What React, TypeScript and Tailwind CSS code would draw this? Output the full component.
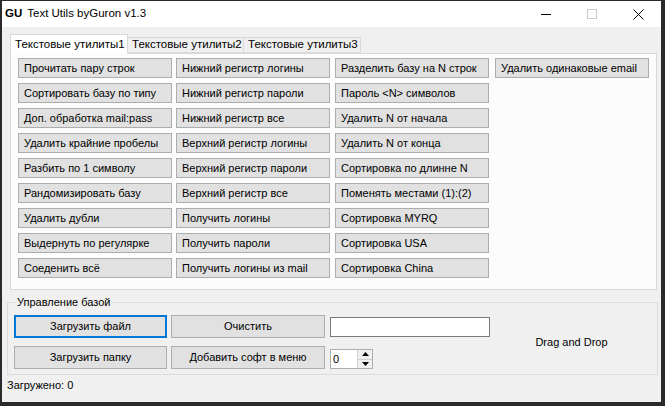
import React from "react";

const col1 = [
  "Прочитать пару строк",
  "Сортировать базу по типу",
  "Доп. обработка mail:pass",
  "Удалить крайние пробелы",
  "Разбить по 1 символу",
  "Рандомизировать базу",
  "Удалить дубли",
  "Выдернуть по регулярке",
  "Соеденить всё",
];
const col2 = [
  "Нижний регистр логины",
  "Нижний регистр пароли",
  "Нижний регистр все",
  "Верхний регистр логины",
  "Верхний регистр пароли",
  "Верхний регистр все",
  "Получить логины",
  "Получить пароли",
  "Получить логины из mail",
];
const col3 = [
  "Разделить базу на N строк",
  "Пароль <N> символов",
  "Удалить N от начала",
  "Удалить N от конца",
  "Сортировка по длинне N",
  "Поменять местами (1):(2)",
  "Сортировка MYRQ",
  "Сортировка USA",
  "Сортировка China",
];
const col4 = ["Удалить одинаковые email"];

function GridButton({ label }: { label: string }) {
  return (
    <div className="h-[20px] w-[154px] shrink-0 bg-[#e1e1e1] border border-[#adadad] flex items-center pl-[5px] text-[11px] leading-none text-black whitespace-nowrap">
      {label}
    </div>
  );
}

function Column({ items }: { items: string[] }) {
  return (
    <div className="flex flex-col gap-[5px]">
      {items.map((t) => (
        <GridButton key={t} label={t} />
      ))}
    </div>
  );
}

export default function App() {
  return (
    <div
      className="w-[665px] h-[406px] bg-[#2a2a2a] pl-[2px] pt-[1px] pr-[4px] pb-[4px]"
      style={{ fontFamily: '"Liberation Sans", Arial, sans-serif' }}
    >
      <div className="w-full h-full bg-[#f0f0f0] flex flex-col">
        {/* Title bar */}
        <div className="h-[26px] bg-white flex items-center shrink-0">
          <span className="ml-[3px] text-[11.5px] font-bold text-black">GU</span>
          <span className="ml-[5px] text-[11.5px] text-black">Text Utils byGuron v1.3</span>
          <div className="flex-1" />
          <div className="w-[46px] h-full flex items-center justify-center">
            <div className="w-[10px] h-px bg-black" />
          </div>
          <div className="w-[46px] h-full flex items-center justify-center">
            <div className="w-[10px] h-[10px] border border-[#c8c8c8]" />
          </div>
          <div className="w-[46px] h-full flex items-center justify-center">
            <svg width="11" height="11" viewBox="0 0 11 11">
              <path d="M0.5 0.5 L10.5 10.5 M10.5 0.5 L0.5 10.5" stroke="#000" strokeWidth="1" />
            </svg>
          </div>
        </div>

        {/* Body */}
        <div className="flex-1 flex flex-col pl-[5px]">
          {/* Tab headers */}
          <div className="mt-[7px] ml-[3px] flex items-end h-[19px]">
            <div className="relative z-10 h-[20px] -mb-px bg-white border border-b-0 border-[#d9d9d9] pl-[4px] flex items-center text-[11.5px] text-black whitespace-nowrap w-[118px]">
              Текстовые утилиты1
            </div>
            <div className="h-[16px] border border-l-0 border-[#d9d9d9] bg-[#f0f0f0] pl-[4px] flex items-center text-[11.5px] text-black whitespace-nowrap w-[116px]">
              Текстовые утилиты2
            </div>
            <div className="h-[16px] border border-l-0 border-[#d9d9d9] bg-[#f0f0f0] pl-[4px] flex items-center text-[11.5px] text-black whitespace-nowrap w-[117px]">
              Текстовые утилиты3
            </div>
          </div>
          {/* Tab page */}
          <div className="ml-[3px] w-[647px] h-[237px] border border-[#d9d9d9] bg-[#fcfcfc] pl-[7px] pt-[4px] flex">
            <Column items={col1} />
            <div className="w-[4px]" />
            <Column items={col2} />
            <div className="w-[5px]" />
            <Column items={col3} />
            <div className="w-[6px]" />
            <Column items={col4} />
          </div>

          {/* Group box */}
          <fieldset className="mt-[5px] w-[651px] border border-[#dcdcdc] px-[6px] pt-[6px] pb-[5px] min-w-0">
            <legend className="ml-[1px] px-[2px] text-[11px] leading-[14px] text-black">Управление базой</legend>
            <div className="flex items-center">
              <div className="flex flex-col gap-[8px]">
                <div className="flex gap-[4px]">
                  <div className="w-[153px] h-[23px] bg-[#e1e1e1] border-2 border-[#0078d7] flex items-center justify-center text-[11px] text-black">
                    Загрузить файл
                  </div>
                  <div className="w-[154px] h-[23px] bg-[#e1e1e1] border border-[#adadad] flex items-center justify-center text-[11px] text-black">
                    Очистить
                  </div>
                  <div className="ml-[1px] w-[160px] h-[20px] mt-[2px] bg-white border border-[#7a7a7a]" />
                </div>
                <div className="flex gap-[4px]">
                  <div className="w-[153px] h-[23px] bg-[#e1e1e1] border border-[#adadad] flex items-center justify-center text-[11px] text-black">
                    Загрузить папку
                  </div>
                  <div className="w-[154px] h-[23px] bg-[#e1e1e1] border border-[#adadad] flex items-center justify-center text-[11px] text-black">
                    Добавить софт в меню
                  </div>
                  <div className="ml-[1px] mt-[3px] w-[43px] h-[20px] bg-white border border-[#adadad] flex items-center">
                    <span className="ml-[2px] flex-1 text-[11px] text-black leading-none">0</span>
                    <div className="w-[15px] h-full flex flex-col border-l border-[#d0d0d0]">
                      <div className="flex-1 flex items-center justify-center bg-[#f0f0f0] border-b border-[#d0d0d0]">
                        <svg width="7" height="4" viewBox="0 0 7 4">
                          <path d="M3.5 0 L7 4 L0 4 Z" fill="#000" />
                        </svg>
                      </div>
                      <div className="flex-1 flex items-center justify-center bg-[#f0f0f0]">
                        <svg width="7" height="4" viewBox="0 0 7 4">
                          <path d="M0 0 L7 0 L3.5 4 Z" fill="#000" />
                        </svg>
                      </div>
                    </div>
                  </div>
                </div>
              </div>
              <div className="flex-1 flex justify-center text-[11px] text-black">
                <span className="ml-[2px]">Drag and Drop</span>
              </div>
            </div>
          </fieldset>

          <div className="mt-[3px] text-[11px] leading-[14px] text-black">Загружено: 0</div>
        </div>
      </div>
    </div>
  );
}
